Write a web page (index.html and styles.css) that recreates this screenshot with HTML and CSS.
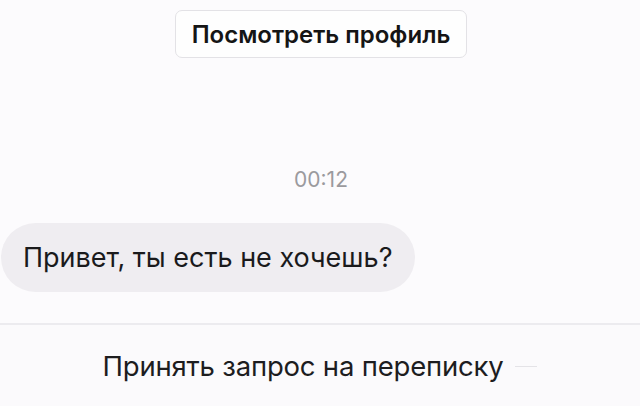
FILE: index.html
```html
<!DOCTYPE html>
<html lang="ru">
<head>
<meta charset="utf-8">
<link rel="stylesheet" href="styles.css">
</head>
<body>
<div class="screen">
  <div class="top">
    <button class="profile-btn">Посмотреть профиль</button>
  </div>
  <div class="chat">
    <div class="time">00:12</div>
    <div class="row">
      <div class="bubble">Привет, ты есть не хочешь?</div>
    </div>
  </div>
  <div class="footer">
    <span class="accept">Принять запрос на переписку</span>
    <span class="dash"></span>
  </div>
</div>
</body>
</html>
```
FILE: styles.css
```css
html, body {
  margin: 0;
  padding: 0;
}
body {
  width: 640px;
  height: 406px;
  overflow: hidden;
  background: #fcfbfd;
  font-family: Inter, "Liberation Sans", Arial, sans-serif;
  color: #1b1b1d;
}
.screen {
  display: flex;
  flex-direction: column;
  height: 406px;
}
.top {
  display: flex;
  justify-content: center;
  padding-top: 10px;
  padding-left: 2px;
}
.profile-btn {
  width: 292px;
  height: 48px;
  box-sizing: border-box;
  background: #fefefe;
  border: 1.5px solid #e3e2e6;
  border-radius: 7px;
  font-family: Inter, "Liberation Sans", Arial, sans-serif;
  font-weight: 600;
  font-size: 24px;
  letter-spacing: 0;
  color: #151515;
  padding: 0;
}
.chat {
  flex: 1;
  display: flex;
  flex-direction: column;
}
.time {
  margin-top: 110px;
  text-align: center;
  padding-left: 2px;
  font-size: 21px;
  color: #9b9a9e;
  height: 24px;
  line-height: 24px;
}
.row {
  margin-top: 31px;
  display: flex;
}
.bubble {
  margin-left: 1px;
  width: 414px;
  height: 69px;
  box-sizing: border-box;
  border-radius: 35px;
  background: #efedf1;
  padding-left: 22px;
  display: flex;
  align-items: center;
  font-size: 27px;
  color: #1a1a1c;
  letter-spacing: 0;
}
.footer {
  border-top: 2px solid #ecebef;
  height: 83px;
  box-sizing: border-box;
  background: #fbfafc;
  display: flex;
  align-items: center;
  justify-content: center;
  gap: 12px;
  padding-top: 1px;
}
.accept {
  font-size: 27.5px;
  color: #1d1d1f;
  letter-spacing: -0.2px;
}
.dash {
  width: 22px;
  height: 1px;
  background: #e4e3e7;
}
```
